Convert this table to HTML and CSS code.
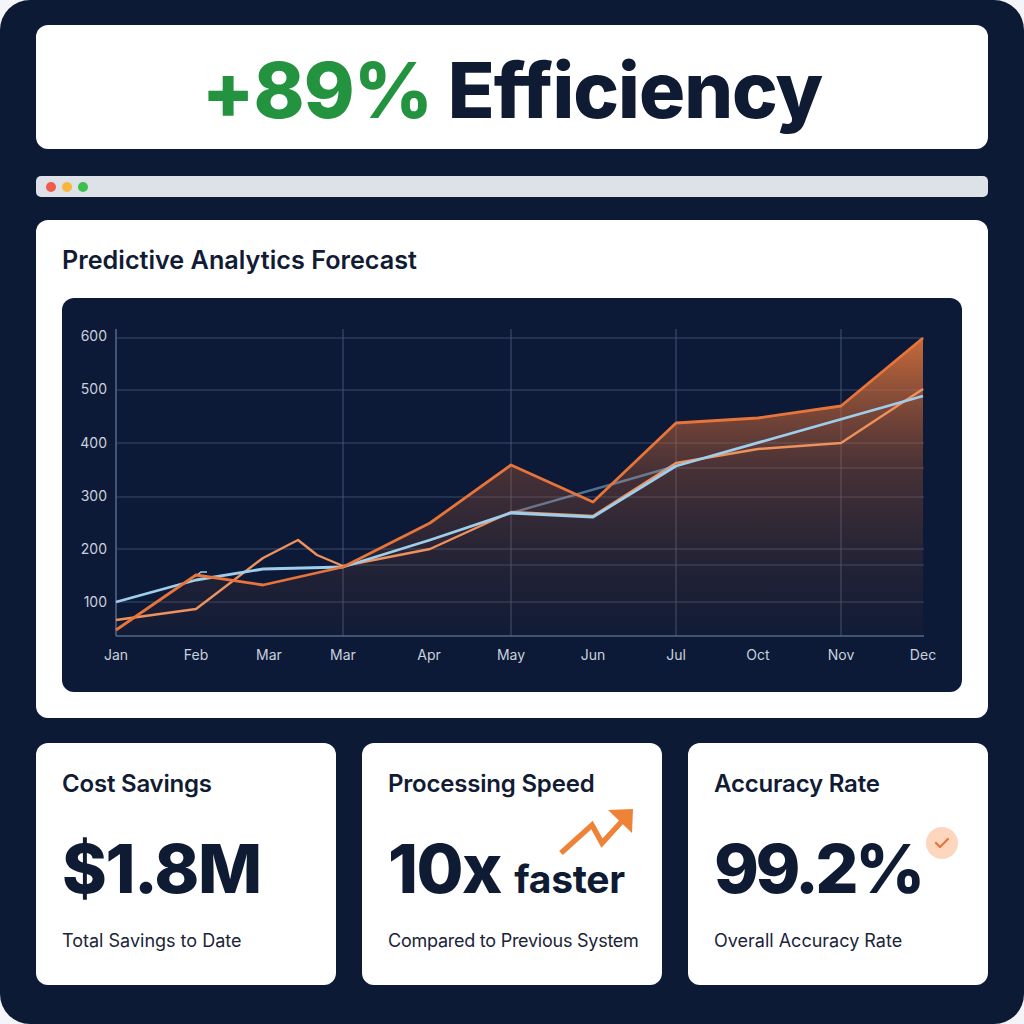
FILE: index.html
```html
<!DOCTYPE html>
<html lang="en">
<head>
<meta charset="utf-8">
<title>Efficiency Dashboard</title>
<link rel="stylesheet" href="styles.css">
</head>
<body>
<div class="frame">
  <header class="hero">
    <h1 class="hero-title"><span class="pos">+89%</span> Efficiency</h1>
  </header>

  <div class="browser-bar">
    <span class="dot red"></span><span class="dot yellow"></span><span class="dot green"></span>
  </div>

  <section class="chart-card">
    <h2 class="chart-title">Predictive Analytics Forecast</h2>
    <div class="chart-box">
      <svg class="chart" viewBox="62 298 900 394" width="900" height="394">
        <defs>
          <linearGradient id="fillGrad" x1="0" y1="338" x2="0" y2="636" gradientUnits="userSpaceOnUse">
            <stop offset="0" stop-color="#e8783c" stop-opacity="0.85"/>
            <stop offset="0.45" stop-color="#b05a34" stop-opacity="0.35"/>
            <stop offset="1" stop-color="#6a3a2a" stop-opacity="0.05"/>
          </linearGradient>
        </defs>
        <g class="grid">
          <line x1="116" y1="338" x2="924" y2="338"/>
          <line x1="116" y1="390" x2="924" y2="390"/>
          <line x1="116" y1="443" x2="924" y2="443"/>
          <line x1="116" y1="497" x2="924" y2="497"/>
          <line x1="116" y1="549" x2="924" y2="549"/>
          <line x1="116" y1="602" x2="924" y2="602"/>
          <line x1="343" y1="565" x2="924" y2="565"/>
          <line x1="676" y1="468" x2="924" y2="468"/>
          <line x1="343" y1="329" x2="343" y2="636"/>
          <line x1="511" y1="329" x2="511" y2="636"/>
          <line x1="676" y1="329" x2="676" y2="636"/>
          <line x1="841" y1="329" x2="841" y2="636"/>
        </g>
        <g class="axis">
          <line x1="116" y1="329" x2="116" y2="636"/>
          <line x1="116" y1="636" x2="924" y2="636"/>
        </g>
        <path class="area" d="M116,630 L196,575 L263,585 L343,567 L430,523 L511,465 L593,502 L676,423 L758,418 L841,406 L923,338 L923,636 L116,636 Z"/>
        <polyline class="line-orange-light" points="116,620 196,609 263,558 298,540 317,555 343,566 430,549 511,512 593,516 676,463 758,449 841,443 923,389"/>
        <polyline class="line-blue-faint" points="511,513 676,466"/>
        <polyline class="line-blue" points="116,602 196,580 263,569 343,567 430,540 511,513 593,517 676,466 923,396"/>
        <polyline class="line-blue-hook" points="196,576 201,572 207,572"/>
        <polyline class="line-orange" points="116,630 196,575 263,585 343,567 430,523 511,465 593,502 676,423 758,418 841,406 923,338"/>
        <g class="ylabels">
          <text x="107" y="341">600</text>
          <text x="107" y="394">500</text>
          <text x="107" y="448">400</text>
          <text x="107" y="501">300</text>
          <text x="107" y="554">200</text>
          <text x="107" y="607">100</text>
        </g>
        <g class="xlabels">
          <text x="116" y="660">Jan</text>
          <text x="196" y="660">Feb</text>
          <text x="269" y="660">Mar</text>
          <text x="343" y="660">Mar</text>
          <text x="429" y="660">Apr</text>
          <text x="511" y="660">May</text>
          <text x="593" y="660">Jun</text>
          <text x="676" y="660">Jul</text>
          <text x="758" y="660">Oct</text>
          <text x="841" y="660">Nov</text>
          <text x="923" y="660">Dec</text>
        </g>
      </svg>
    </div>
  </section>

  <div class="stats">
    <article class="stat-card">
      <h3 class="stat-title">Cost Savings</h3>
      <div class="stat-value">$1.8M</div>
      <p class="stat-sub">Total Savings to Date</p>
    </article>
    <article class="stat-card">
      <h3 class="stat-title">Processing Speed</h3>
      <div class="stat-value">10x <span class="unit">faster</span></div>
      <p class="stat-sub">Compared to Previous System</p>
      <svg class="trend-icon" viewBox="0 0 78 50" width="78" height="50">
        <polyline points="3,46 34,18 44,36 66,12" fill="none" stroke="#ee8237" stroke-width="5.5" stroke-linejoin="miter" stroke-linecap="butt"/>
        <polygon points="50,3 75,2 74,26" fill="#ee8237"/>
      </svg>
    </article>
    <article class="stat-card">
      <h3 class="stat-title">Accuracy Rate</h3>
      <div class="stat-value tight">99.2%</div>
      <p class="stat-sub">Overall Accuracy Rate</p>
      <span class="check-badge">
        <svg viewBox="0 0 32 32" width="32" height="32"><polyline points="10,16 14,20 22,12" fill="none" stroke="#e07638" stroke-width="2.2" stroke-linecap="round" stroke-linejoin="round"/></svg>
      </span>
    </article>
  </div>
</div>
</body>
</html>
```

FILE: styles.css
```css
* { box-sizing: border-box; }

html, body {
  margin: 0;
  padding: 0;
  background: #f4f5f8;
}

body {
  font-family: "Inter", "Noto Sans", "Liberation Sans", sans-serif;
  color: #0f1b33;
}

.frame {
  width: 1024px;
  height: 1024px;
  background: #0c1a35;
  border-radius: 30px;
  padding: 25px 36px 0;
  display: flex;
  flex-direction: column;
}

.hero {
  height: 124px;
  background: #ffffff;
  border-radius: 12px;
  display: flex;
  align-items: center;
  justify-content: center;
}

.hero-title {
  margin: 0;
  font-size: 77px;
  font-weight: 800;
  letter-spacing: -1px;
  line-height: 1;
  color: #0f1b33;
  padding-top: 6px;
}

.hero-title .pos { color: #24933f; }

.browser-bar {
  margin-top: 27px;
  height: 21px;
  background: #dde1e8;
  border-radius: 5px;
  display: flex;
  align-items: center;
  gap: 6px;
  padding-left: 10px;
}

.dot {
  width: 10px;
  height: 10px;
  border-radius: 50%;
}
.dot.red { background: #f05b4b; }
.dot.yellow { background: #f7b63c; }
.dot.green { background: #3cbf4f; }

.chart-card {
  margin-top: 23px;
  height: 498px;
  background: #ffffff;
  border-radius: 12px;
  padding: 26px 26px;
}

.chart-title {
  margin: 0 0 24px;
  font-size: 25.2px;
  line-height: 28px;
  font-weight: 600;
  color: #111c34;
  letter-spacing: 0;
}

.chart-box {
  height: 394px;
  background: #0d1a37;
  border-radius: 12px;
  overflow: hidden;
}

.chart { display: block; }

.grid line {
  stroke: #4a5a7a;
  stroke-width: 1.2;
  opacity: 0.75;
}

.axis line {
  stroke: #56688a;
  stroke-width: 1.5;
}

.area { fill: url(#fillGrad); }

.line-orange {
  fill: none;
  stroke: #e8743a;
  stroke-width: 2.8;
  stroke-linejoin: round;
}

.line-orange-light {
  fill: none;
  stroke: #ef915c;
  stroke-width: 2.4;
  stroke-linejoin: round;
}

.line-blue {
  fill: none;
  stroke: #9fcdec;
  stroke-width: 2.8;
  stroke-linejoin: round;
}

.line-blue-faint {
  fill: none;
  stroke: #8fb4d6;
  stroke-width: 2.4;
  opacity: 0.55;
}

.line-blue-hook {
  fill: none;
  stroke: #9fcdec;
  stroke-width: 1.6;
}

.ylabels text {
  font-family: "Inter", "Liberation Sans", sans-serif;
  font-size: 14px;
  fill: #c9d1de;
  text-anchor: end;
}

.xlabels text {
  font-family: "Inter", "Liberation Sans", sans-serif;
  font-size: 14px;
  fill: #c9d1de;
  text-anchor: middle;
}

.stats {
  margin-top: 25px;
  display: grid;
  grid-template-columns: repeat(3, 300px);
  gap: 26px;
}

.stat-card {
  position: relative;
  height: 242px;
  background: #ffffff;
  border-radius: 12px;
  padding: 26px 20px 0 26px;
}

.stat-title {
  margin: 0;
  font-size: 24px;
  line-height: 30px;
  font-weight: 600;
  color: #111c34;
  letter-spacing: -0.2px;
}

.stat-value {
  margin-top: 29px;
  height: 80px;
  font-size: 68px;
  line-height: 80px;
  font-weight: 800;
  letter-spacing: -1.5px;
  color: #0f1b33;
  white-space: nowrap;
}

.stat-value.tight { letter-spacing: -3.5px; }

.stat-value .unit {
  font-size: 39px;
  line-height: 1;
  font-weight: 700;
  letter-spacing: -0.3px;
}

.stat-sub {
  margin: 21px 0 0;
  font-size: 18px;
  line-height: 24px;
  color: #1a2438;
  white-space: nowrap;
}

.stat-card:nth-child(2) .stat-sub { letter-spacing: -0.25px; }

.trend-icon {
  position: absolute;
  left: 196px;
  top: 64px;
}

.check-badge {
  position: absolute;
  right: 30px;
  top: 84px;
  width: 32px;
  height: 32px;
  border-radius: 50%;
  background: #fcd6bd;
  display: flex;
}
```
